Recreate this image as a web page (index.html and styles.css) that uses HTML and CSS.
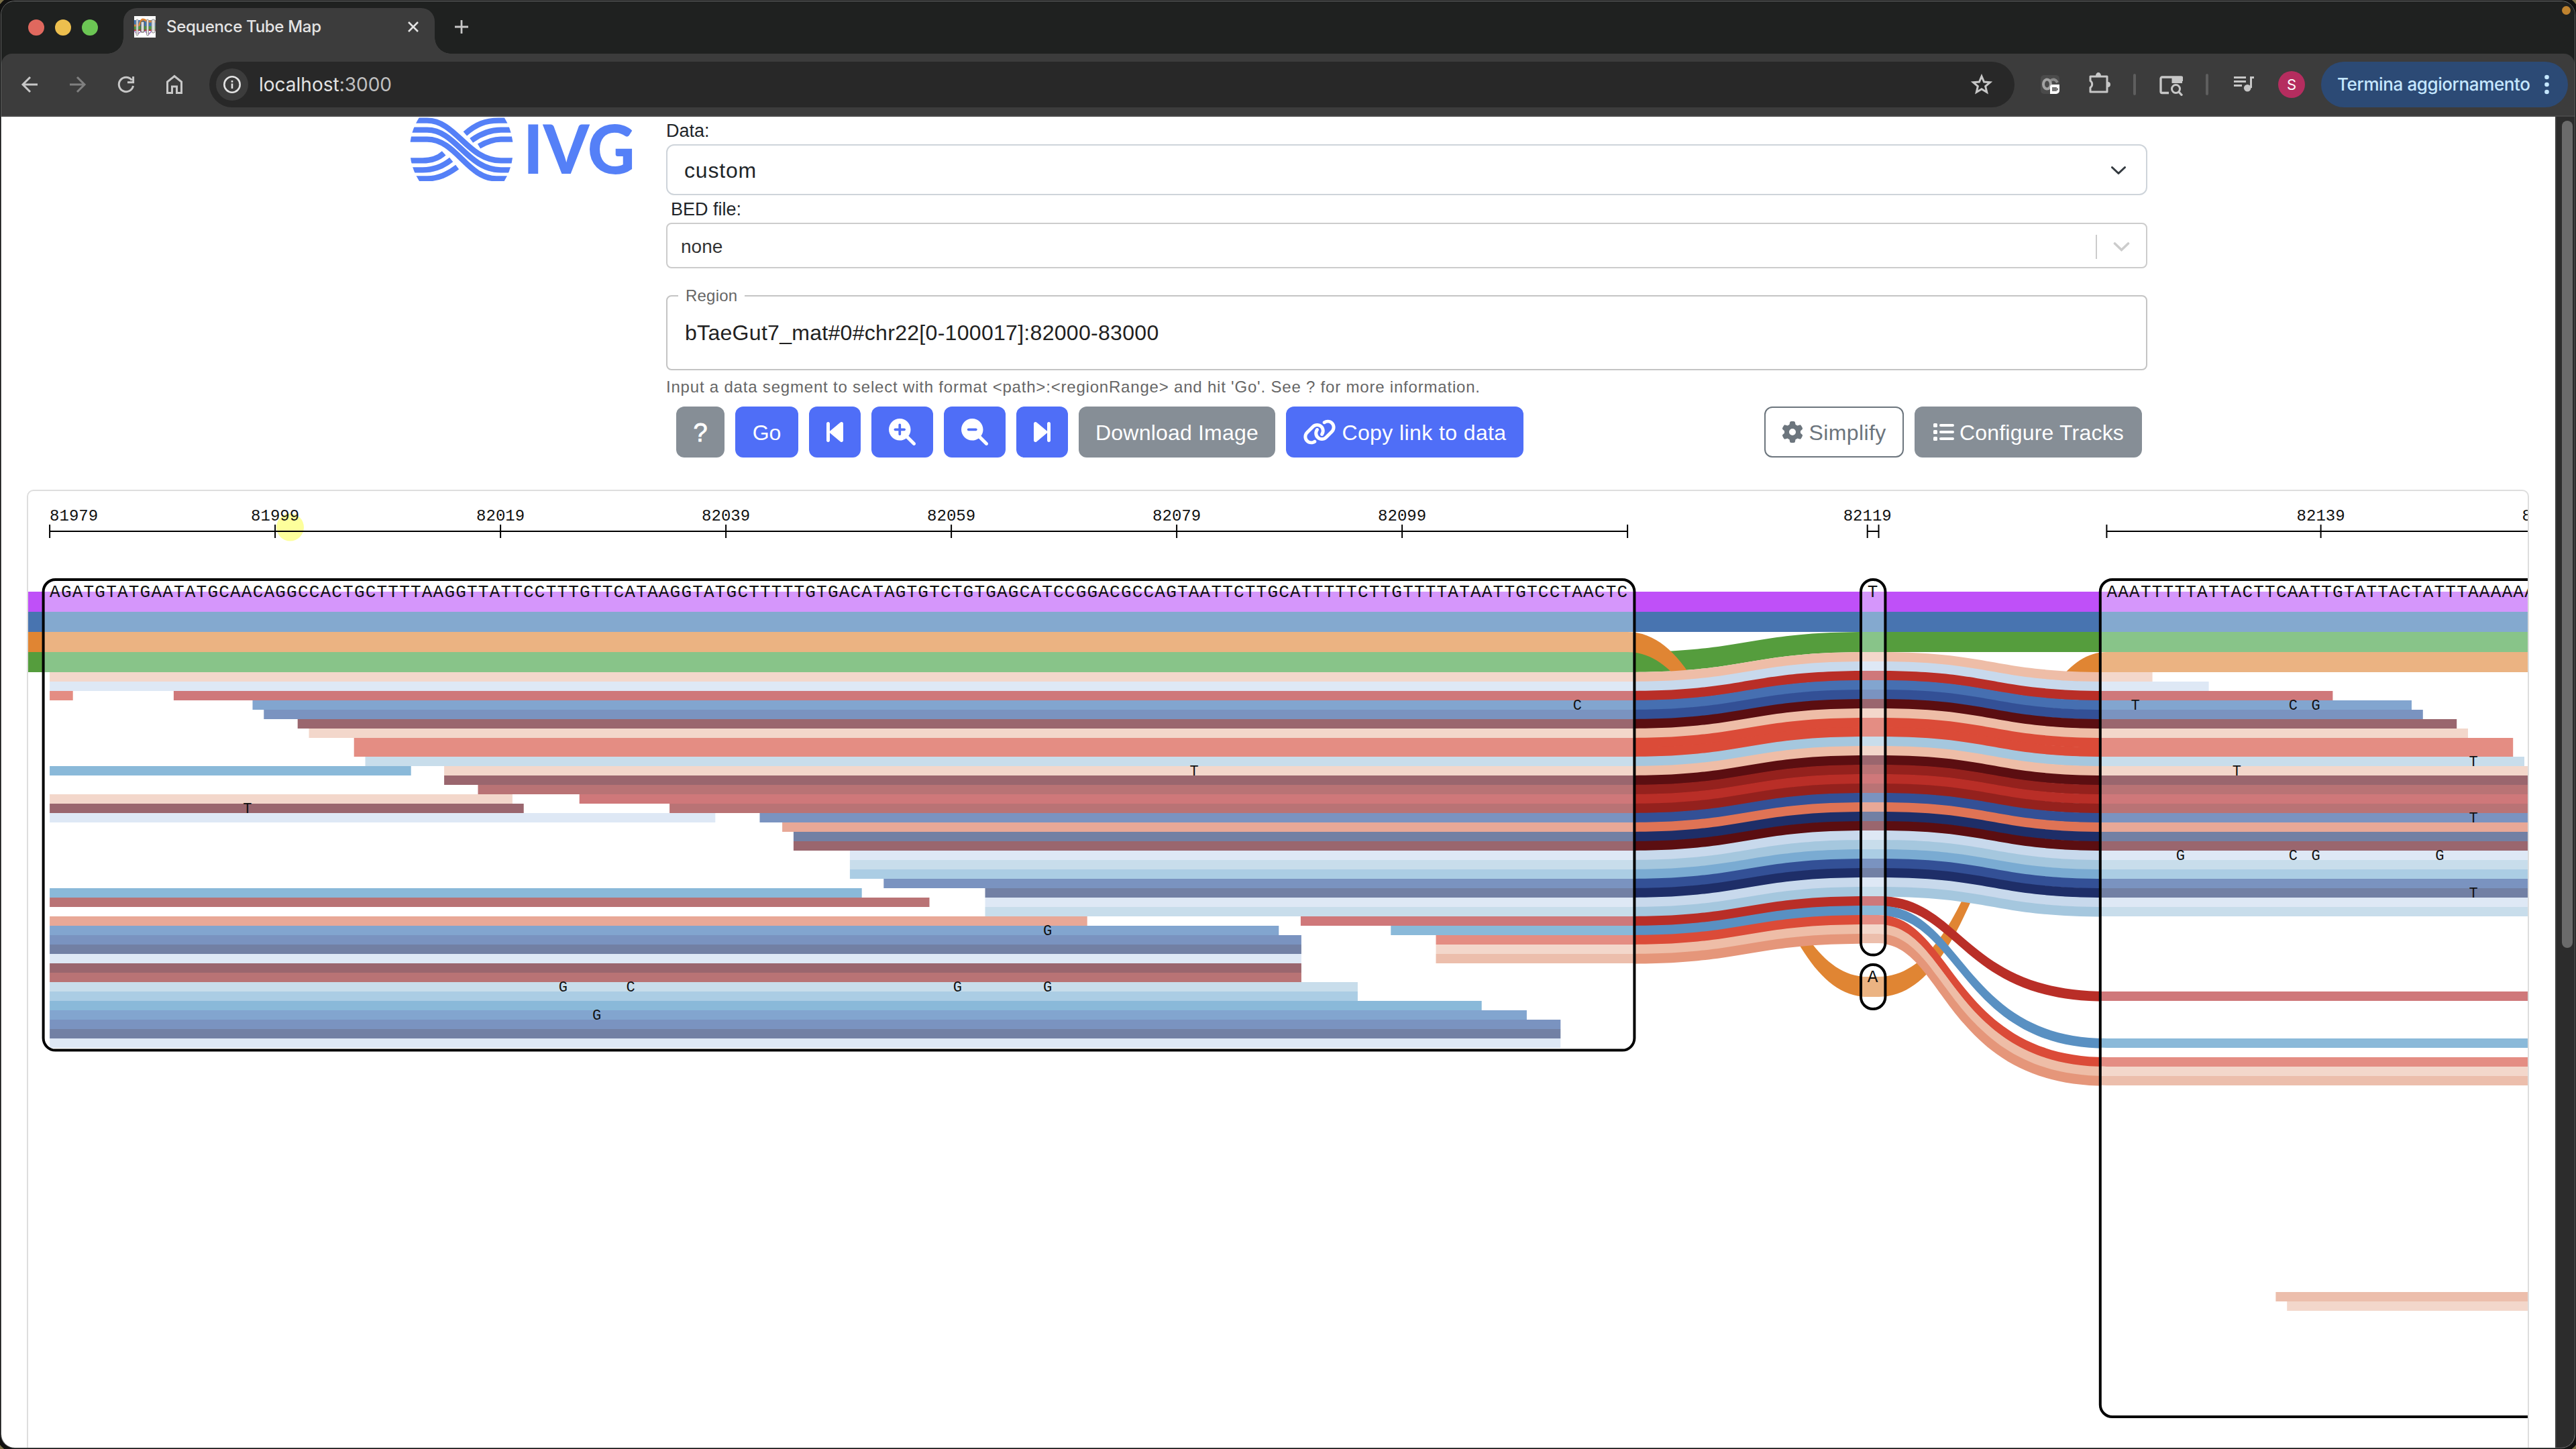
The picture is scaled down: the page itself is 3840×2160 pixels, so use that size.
FILE: index.html
```html
<!DOCTYPE html>
<html lang="en">
<head>
<meta charset="utf-8">
<title>Sequence Tube Map</title>
<link rel="stylesheet" href="styles.css">
</head>
<body>
<div class="window">
  <header class="tabstrip">
    <div class="lights"><i class="red"></i><i class="yellow"></i><i class="green"></i></div>
    <div class="tab">
      <svg class="favicon" viewBox="0 0 32 32"><rect width="32" height="32" fill="#fff"/><path d="M0 6h32v9H0z" fill="#3f76b5"/><path d="M0 15h32v5H0z" fill="#4c9a3b"/><path d="M0 20h32v2H0z" fill="#b8322e"/><path d="M0 14h6C9 14 9 5 13 5s5 3 8 3h11" fill="none" stroke="#e08533" stroke-width="3"/><path d="M0 22l5 5 6-5M16 22l5 6 5-6" fill="none" stroke="#a678c9" stroke-width="1.5"/><g fill="#e8e8e8" fill-opacity=".9" stroke="#8b8b8b"><rect x="3" y="5" width="3" height="24" rx="1.5"/><rect x="10" y="8" width="5" height="16" rx="1" stroke="#444"/><rect x="18.500" y="5" width="3" height="24" rx="1.500"/><rect x="26" y="5" width="5" height="20" rx="2"/></g></svg>
      <span class="tab-title">Sequence Tube Map</span>
      <svg class="tab-close" viewBox="0 0 16 16"><path d="M1 1l14 14M15 1L1 15"/></svg>
    </div>
    <svg class="new-tab" viewBox="0 0 20 20"><path d="M10 0v20M0 10h20"/></svg>
    <i class="rec-dot"></i>
  </header>
  <nav class="toolbar">
    <svg class="nav-icon" viewBox="0 0 24 24"><path d="M24 12H2M13 1L2 12l11 11"/></svg>
    <svg class="nav-icon dim" viewBox="0 0 24 24"><path d="M0 12h22M11 1l11 11-11 11"/></svg>
    <svg class="nav-icon" viewBox="0 0 24 24"><path d="M22.500 14A10.700 10.700 0 1 1 20.500 5.500M22.600 0v8.800H14"/></svg>
    <svg class="nav-icon" viewBox="0 0 24 24"><path d="M1.500 24V8L12-.5 22.500 8v16.500H15.500V15h-7v9.500h-7z"/></svg>
    <div class="address">
      <div class="info"><svg viewBox="0 0 26 26"><circle cx="13" cy="13" r="11.700" fill="none" stroke="#e3e3e3" stroke-width="2.600"/><path d="M13 11.500v7.500M13 7v2.700" stroke="#e3e3e3" stroke-width="2.600"/></svg></div>
      <span class="url">localhost<span class="port">:3000</span></span>
      <svg class="star" viewBox="0 0 30 30"><path d="M15 3.500l3.300 7.800 8.400.7-6.400 5.500 1.900 8.200L15 21.400l-7.200 4.300 1.900-8.200L3.300 12l8.400-.7z"/></svg>
    </div>
    <div class="extensions">
      <svg class="ext" style="width:28px" viewBox="0 0 28 28"><rect width="28" height="28" rx="5" fill="#4b4b4b"/><ellipse cx="9.500" cy="13.500" rx="5.500" ry="7" fill="none" stroke="#a3a3a3" stroke-width="4"/><path d="M15 8q6-4 10 3" fill="none" stroke="#8d8d8d" stroke-width="4"/><path d="M18 14h10v9a5 5 0 0 1-5 5h-9V18a4 4 0 0 1 4-4z" fill="#fff"/><path d="M17 18h7v2l2-1v4l-2-1v2h-7z" fill="#777"/></svg>
      <svg class="ext puzzle" viewBox="0 0 32 32"><path d="M2 6h25v23H2v-6.500a6 6 0 0 0 0-10z" fill="none" stroke="#c7c7c7" stroke-width="3" stroke-linejoin="round"/><path d="M10 5a4 5 0 0 1 8 0M28 14a4 4 0 0 1 0 8" fill="#c7c7c7"/></svg>
      <i class="rule"></i>
      <svg class="ext lens" viewBox="0 0 35 30"><path d="M14 25.500H4a2 2 0 0 1-2-2V4a2 2 0 0 1 2-2h28a2 2 0 0 1 2 2v4" fill="none" stroke="#c7c7c7" stroke-width="3.300"/><path d="M18.500 1H32a2 2 0 0 1 2 2v8H18.500z" fill="#c7c7c7"/><circle cx="24.500" cy="19.500" r="6" fill="none" stroke="#c7c7c7" stroke-width="3"/><path d="M28.500 23.500l5.500 6" stroke="#c7c7c7" stroke-width="3.300"/></svg>
      <i class="rule"></i>
      <svg class="ext music" viewBox="0 0 30 23"><path d="M0 1.500h18M0 7.500h18M0 13.500h12M25.500 17V1.500h4.500" fill="none" stroke="#c7c7c7" stroke-width="3"/><circle cx="20.200" cy="17.300" r="5.300" fill="#c7c7c7"/></svg>
      <div class="avatar">S</div>
    </div>
    <div class="update"><span>Termina aggiornamento</span><svg viewBox="0 0 7 30"><circle cx="3.500" cy="4" r="3.300"/><circle cx="3.500" cy="15" r="3.300"/><circle cx="3.500" cy="26" r="3.300"/></svg></div>
  </nav>

  <div class="viewport">
    <main class="page">
      <section class="top">
        <svg class="logo" viewBox="0 0 1146 330">
          <clipPath id="oval"><path d="M75 15H455Q495 80 495 157Q495 235 455 300H75Q33 235 33 157Q33 80 75 15z"/></clipPath>
          <g clip-path="url(#oval)" fill="none" stroke="#5580f7" stroke-width="25">
            <path d="M20 29H110C240 29 290 208 440 208H500"/><path d="M20 71H110C240 71 290 250 440 250H500"/><path d="M20 113H110C240 113 290 289 420 289H500"/>
            <path d="M500 29H430C370 29 330 45 280 88"/><path d="M500 71H440C390 71 350 88 308 118"/><path d="M500 113H440C410 113 380 122 342 144"/>
            <path d="M20 208H90C130 208 160 198 185 175"/><path d="M20 250H90C140 250 180 235 218 204"/><path d="M20 289H110C160 289 200 270 245 237"/>
          </g>
          <g class="wordmark"><text x="540" y="266" textLength="500" lengthAdjust="spacingAndGlyphs">IVG</text></g>
        </svg>
        <div class="form">
          <label class="label">Data:</label>
          <div class="select"><span>custom</span><svg viewBox="0 0 22 12"><path d="M1.500 1.500l9.500 9 9.500-9"/></svg></div>
          <label class="label bed">BED file:</label>
          <div class="combo"><span>none</span><i></i><svg viewBox="0 0 24 14"><path d="M2 2l10 9.500L22 2"/></svg></div>
          <fieldset class="region"><legend>Region</legend><span>bTaeGut7_mat#0#chr22[0-100017]:82000-83000</span></fieldset>
          <p class="helper">Input a data segment to select with format &lt;path&gt;:&lt;regionRange&gt; and hit 'Go'. See ? for more information.</p>
          <div class="buttons">
            <button class="btn grey w-help">?</button>
            <button class="btn blue w-go">Go</button>
            <button class="btn blue w-step"><svg class="i-step" viewBox="0 0 320 512"><path d="M267.500 440.600c9.500 7.900 22.800 9.700 34.100 4.400s18.400-16.600 18.400-29V96c0-12.400-7.200-23.700-18.400-29s-24.500-3.600-34.100 4.400l-192 160L64 241V96c0-17.700-14.300-32-32-32S0 78.300 0 96v320c0 17.700 14.300 32 32 32s32-14.300 32-32V271l11.500 9.600 192 160z"/></svg></button>
            <button class="btn blue w-zoom"><svg class="i-zoom" viewBox="0 0 512 512"><path fill-rule="evenodd" d="M416 208c0 45.900-14.900 88.300-40 122.700L502.600 457.400c12.500 12.500 12.500 32.800 0 45.300s-32.800 12.500-45.300 0L330.700 376c-34.400 25.200-76.800 40-122.700 40C93.100 416 0 322.900 0 208S93.100 0 208 0S416 93.100 416 208zM184 296c0 13.300 10.700 24 24 24s24-10.700 24-24v-64h64c13.300 0 24-10.700 24-24s-10.700-24-24-24h-64v-64c0-13.300-10.700-24-24-24s-24 10.700-24 24v64h-64c-13.300 0-24 10.700-24 24s10.700 24 24 24h64v64z"/></svg></button>
            <button class="btn blue w-zoom"><svg class="i-zoom" viewBox="0 0 512 512"><path fill-rule="evenodd" d="M416 208c0 45.900-14.900 88.300-40 122.700L502.600 457.400c12.500 12.500 12.500 32.800 0 45.300s-32.800 12.500-45.300 0L330.700 376c-34.400 25.200-76.800 40-122.700 40C93.100 416 0 322.900 0 208S93.100 0 208 0S416 93.100 416 208zM136 184c-13.300 0-24 10.700-24 24s10.700 24 24 24h144c13.300 0 24-10.700 24-24s-10.700-24-24-24H136z"/></svg></button>
            <button class="btn blue w-step"><svg class="i-step flip" viewBox="0 0 320 512"><path d="M267.500 440.600c9.500 7.900 22.800 9.700 34.100 4.400s18.400-16.600 18.400-29V96c0-12.400-7.200-23.700-18.400-29s-24.500-3.600-34.100 4.400l-192 160L64 241V96c0-17.700-14.300-32-32-32S0 78.300 0 96v320c0 17.700 14.300 32 32 32s32-14.300 32-32V271l11.500 9.600 192 160z"/></svg></button>
            <button class="btn grey w-download">Download Image</button>
            <button class="btn blue w-copy"><svg class="i-link" viewBox="0 0 640 512"><path d="M579.800 267.700c56.500-56.500 56.500-148 0-204.500c-50-50-128.800-56.500-186.300-15.400l-1.600 1.100c-14.400 10.300-17.700 30.300-7.400 44.600s30.300 17.700 44.600 7.400l1.600-1.100c32.100-22.900 76-19.300 103.800 8.600c31.500 31.500 31.500 82.500 0 114L422.300 334.800c-31.500 31.500-82.500 31.500-114 0c-27.900-27.900-31.500-71.800-8.600-103.800l1.100-1.600c10.300-14.400 6.900-34.400-7.400-44.600s-34.400-6.900-44.600 7.400l-1.100 1.600C206.500 251.200 213 330 263 380c56.500 56.500 148 56.500 204.500 0L579.800 267.700zM60.200 244.300c-56.500 56.500-56.500 148 0 204.500c50 50 128.800 56.500 186.300 15.400l1.600-1.100c14.400-10.300 17.700-30.300 7.400-44.600s-30.300-17.700-44.600-7.400l-1.600 1.100c-32.100 22.900-76 19.300-103.800-8.600C74 372 74 321 105.500 289.500L217.700 177.200c31.500-31.500 82.500-31.500 114 0c27.900 27.900 31.500 71.800 8.600 103.900l-1.100 1.600c-10.300 14.400-6.900 34.400 7.400 44.600s34.400 6.900 44.600-7.400l1.100-1.600C433.500 260.800 427 182 377 132c-56.500-56.500-148-56.500-204.500 0L60.200 244.300z"/></svg><span>Copy link to data</span></button>
            <div class="spacer"></div>
            <button class="btn outline w-simplify"><svg class="i-em" viewBox="0 0 512 512"><path fill-rule="evenodd" d="M495.900 166.600c3.200 8.700 .5 18.400-6.400 24.600l-43.300 39.400c1.100 8.300 1.700 16.800 1.700 25.400s-.6 17.100-1.700 25.400l43.300 39.400c6.900 6.200 9.600 15.900 6.400 24.600c-4.400 11.900-9.700 23.300-15.800 34.300l-4.700 8.100c-6.600 11-14 21.400-22.100 31.200c-5.900 7.200-15.700 9.600-24.500 6.800l-55.700-17.700c-13.400 10.300-28.200 18.900-44 25.400l-12.500 57.100c-2 9.100-9 16.300-18.200 17.800c-13.800 2.300-28 3.500-42.500 3.500s-28.700-1.200-42.500-3.500c-9.200-1.500-16.200-8.700-18.200-17.800l-12.500-57.100c-15.800-6.500-30.600-15.100-44-25.400L83.100 425.900c-8.800 2.800-18.600 .3-24.500-6.800c-8.100-9.800-15.500-20.200-22.100-31.200l-4.700-8.100c-6.100-11-11.400-22.400-15.800-34.300c-3.200-8.700-.5-18.400 6.400-24.600l43.300-39.400C64.600 273.100 64 264.600 64 256s.6-17.100 1.700-25.400L22.400 191.200c-6.900-6.200-9.600-15.900-6.400-24.600c4.400-11.900 9.700-23.300 15.800-34.300l4.700-8.100c6.600-11 14-21.400 22.100-31.200c5.900-7.200 15.700-9.600 24.500-6.800l55.700 17.700c13.400-10.300 28.200-18.900 44-25.400l12.500-57.100c2-9.100 9-16.300 18.200-17.800C227.300 1.200 241.500 0 256 0s28.700 1.200 42.500 3.500c9.200 1.500 16.200 8.700 18.200 17.800l12.500 57.100c15.800 6.500 30.600 15.100 44 25.400l55.700-17.700c8.800-2.800 18.600-.3 24.500 6.800c8.100 9.800 15.500 20.200 22.100 31.200l4.700 8.100c6.100 11 11.400 22.400 15.800 34.300zM256 336a80 80 0 1 0 0-160 80 80 0 1 0 0 160z"/></svg><span>Simplify</span></button>
            <button class="btn grey w-configure"><svg class="i-em" viewBox="0 0 512 512"><rect x="16" y="48" width="96" height="96" rx="24"/><rect x="16" y="208" width="96" height="96" rx="24"/><rect x="16" y="368" width="96" height="96" rx="24"/><rect x="160" y="64" width="352" height="64" rx="32"/><rect x="160" y="224" width="352" height="64" rx="32"/><rect x="160" y="384" width="352" height="64" rx="32"/></svg><span>Configure Tracks</span></button>
          </div>
        </div>
      </section>
      <section class="panel"><svg id="map" viewBox="42 732 3726 1430"></svg></section>
    </main>
    <aside class="scrollbar"><i></i></aside>
  </div>
</div>
<script src="map.js"></script>
</body>
</html>
```
FILE: styles.css
```css
* { box-sizing: border-box; }
html, body { height: 100%; }
body { margin: 0; overflow: hidden; background: #7d7248; font-family: "Liberation Sans", Arial, sans-serif; color: #212529; }
svg { display: block; flex: none; }

.window { width: 3840px; height: 2160px; display: flex; flex-direction: column; overflow: hidden; border: 2px solid #5f6160; border-top-color: #707272; border-radius: 22px; background: #1f2120; outline: 6px solid #111; outline-offset: -1px; }

.tabstrip { height: 78px; flex: none; display: flex; background: #1f2120; }
.lights { width: 182px; display: flex; gap: 16px; padding: 27px 0 0 40px; }
.lights i { width: 24px; height: 24px; border-radius: 50%; }
.red { background: #e0685e; }
.yellow { background: #edbf4e; }
.green { background: #6cc654; }
.tab { position: relative; width: 464px; height: 68px; margin-top: 10px; padding: 0 24px 12px 16px; display: flex; align-items: center; border-radius: 20px 20px 0 0; background: #3c3c3c; }
.tab::before, .tab::after { content: ""; position: absolute; bottom: 0; width: 24px; height: 24px; }
.tab::before { left: -24px; background: radial-gradient(circle at 0 0, transparent 23.500px, #3c3c3c 24px); }
.tab::after { right: -24px; background: radial-gradient(circle at 100% 0, transparent 23.500px, #3c3c3c 24px); }
.favicon { width: 32px; height: 32px; }
.tab-title { margin-left: 16px; flex: 1; font: 500 24px/30px Inter, sans-serif; letter-spacing: -.3px; color: #e3e3e3; }
.tab-close { width: 16px; height: 16px; stroke: #e3e3e3; stroke-width: 2.600; }
.new-tab { width: 20px; height: 20px; margin: 28px 0 0 30px; stroke: #c7c7c7; stroke-width: 2.800; }
.rec-dot { width: 13px; height: 13px; margin: 7px 6px 0 auto; border-radius: 50%; background: #bf832f; }

.toolbar { height: 94px; flex: none; display: flex; align-items: center; padding: 0 9px 0 30px; background: #3c3c3c; border-bottom: 2px solid #474747; border-radius: 16px 16px 0 0; }
.nav-icon { width: 24px; height: 24px; margin-right: 48px; fill: none; stroke: #c7c7c7; stroke-width: 3; overflow: visible; }
.nav-icon.dim { stroke: #808080; }
.address { flex: none; width: 2691px; height: 68px; margin-left: -8px; padding: 0 33px 0 10px; display: flex; align-items: center; border-radius: 34px; background: #282828; }
.info { width: 48px; height: 48px; display: flex; align-items: center; justify-content: center; border-radius: 50%; background: #3c3c3c; }
.info svg { width: 26px; height: 26px; }
.url { flex: 1; margin-left: 16px; font: 400 28px/34px Inter, sans-serif; color: #e3e3e3; }
.port { color: #c0c0c0; }
.star { width: 32px; height: 32px; fill: none; stroke: #c7c7c7; stroke-width: 2.800; }
.extensions { flex: none; display: flex; align-items: center; margin-left: 39px; width: 418px; }
.ext { height: 28px; }
.puzzle { width: 32px; height: 32px; margin: -4px 34px 0 44px; }
.rule { width: 4px; height: 32px; border-radius: 2px; background: #5e5e5e; }
.lens { width: 35px; height: 30px; margin: 3px 34px 0 35px; }
.music { width: 30px; height: 23px; margin: -2px 36px 0 38px; }
.avatar { width: 40px; height: 40px; border-radius: 50%; background: #b52d5f; color: #fff; font: 22px/40px Inter, sans-serif; text-align: center; }
.update { flex: none; width: 368px; height: 68px; padding: 0 28px 0 24px; display: flex; align-items: center; justify-content: space-between; border-radius: 34px; background: #2c4a75; color: #c5e7ff; font: 500 26px/34px Inter, sans-serif; letter-spacing: -.4px; white-space: nowrap; }
.update svg { width: 7px; height: 30px; fill: #c5e7ff; }

.viewport { flex: 1; min-height: 0; display: flex; background: #fff; }
.page { flex: 1; min-width: 0; display: flex; flex-direction: column; overflow: hidden; }
.scrollbar { width: 29px; padding: 6px 4px 0 8px; background: #2c2c2c; border-left: 2px solid #3c3c3c; }
.scrollbar i { display: block; width: 16px; height: 1233px; border-radius: 8px; background: #6b6b6b; }

.top { display: flex; flex: none; }
.logo { width: 382px; height: 110px; margin: -4px 0 0 598px; overflow: visible; }
.wordmark text { font: 900 302px Lato, sans-serif; fill: #5580f7; }
.form { width: 2208px; display: flex; flex-direction: column; margin-left: 11px; }
.label { height: 41px; font-size: 27px; line-height: 43px; }
.label.bed { padding-left: 7px; }
.select { height: 76px; display: flex; align-items: center; justify-content: space-between; padding: 2px 30px 0 25px; border: 2px solid #ced4da; border-radius: 12px; font-size: 32px; letter-spacing: .8px; }
.select svg { width: 22px; height: 12px; fill: none; stroke: #343a40; stroke-width: 3; stroke-linecap: round; stroke-linejoin: round; }
.combo { height: 68px; display: flex; align-items: center; padding: 3px 24px 0 20px; border: 2px solid #ccc; border-radius: 8px; font-size: 28px; color: #333; }
.combo span { flex: 1; }
.combo i { width: 2px; height: 36px; margin-right: 24px; background: #ccc; }
.combo svg { width: 25px; height: 14px; fill: none; stroke: #ccc; stroke-width: 3.600; stroke-linecap: round; }
.region { height: 125px; margin: 27px 0 0; padding: 0 0 0 26px; border: 2px solid #c4c4c4; border-radius: 8px; min-width: 0; }
.region legend { margin-left: -10px; padding: 0 11px; font-size: 24px; line-height: 28px; letter-spacing: .2px; color: #666; }
.region span { display: block; padding-top: 21px; font-size: 32px; line-height: 40px; letter-spacing: .3px; color: #212121; }
.helper { margin: 0; height: 54px; font-size: 24px; line-height: 50px; letter-spacing: .8px; color: #666; white-space: nowrap; }
.buttons { display: flex; gap: 16px; padding: 0 8px 0 15px; }
.btn { height: 76px; padding: 2px 0 0; display: flex; align-items: center; justify-content: center; border: 0; border-radius: 12px; font: 32px/48px "Liberation Sans", Arial, sans-serif; color: #fff; white-space: nowrap; }
.btn svg { fill: currentColor; margin-top: -2px; }
.blue { background: #4f6ef7; }
.grey { background: #868e96; }
.outline { background: #fff; border: 2px solid #6c757d; color: #6c757d; }
.w-help { width: 72px; font-size: 38px; -webkit-text-stroke: .8px #fff; }
.w-go { width: 94px; }
.w-step { width: 77px; }
.w-zoom { width: 92px; }
.w-download { width: 293px; letter-spacing: .2px; }
.w-copy { width: 354px; gap: 8px; letter-spacing: .4px; }
.w-simplify { width: 208px; gap: 8px; letter-spacing: .4px; }
.w-configure { width: 339px; gap: 8px; letter-spacing: .2px; }
.spacer { flex: 1; }
.i-step { width: 25px; height: 40px; }
.flip { transform: scaleX(-1); }
.i-zoom { width: 40px; height: 40px; }
.i-link { width: 50px; height: 40px; }
.i-em { width: 32px; height: 32px; }

.panel { flex: none; width: 3730px; height: 1440px; margin: 48px 0 0 38px; border: 2px solid #dedede; border-radius: 10px; overflow: hidden; }
.panel svg { width: 3726px; height: 1430px; }
.panel text { font-family: "Liberation Mono", "Courier New", monospace; fill: #111; }
.ruler { stroke: #000; stroke-width: 2; }
.node { fill: none; stroke: #000; stroke-width: 4; }
.tick-label { font-size: 24px; }
.seq { font-size: 26px; }
.mismatch { font-size: 22px; text-anchor: middle; }
```
FILE: map.js
```js
const BASE = 16.8, X1 = 74.1, E1 = 2426.1, X2 = 2783.7, E2 = 2800.5, X3 = 3140.4, EDGE = 3780;

// Each colour: [between nodes, inside a node]
const C = {
  purple: ["#bf50f8", "#d596fb"], blue: ["#4874b0", "#84a9cf"],
  orange: ["#e08533", "#ebb382"], green: ["#559d3d", "#88c489"],
  peach: ["#eebda7", "#f3d7cb"], pale: ["#c8d9ec", "#dee8f5"],
  red: ["#b92e27", "#cf787a"], mid: ["#466fb1", "#82a5cf"],
  royal: ["#335096", "#7a93c0"], maroon: ["#5b0e11", "#9a666e"],
  salmon: ["#db4b38", "#e48d83"], ice: ["#a5c7de", "#c8ddeb"],
  steel: ["#5990c2", "#8ab9d9"], dark: ["#94211d", "#b97375"],
  coral: ["#df7355", "#e8a897"], navy: ["#1e2e68", "#7280a4"],
  sky: ["#7aabd2", "#abcde4"], sand: ["#e5967a", "#ecbeac"]
};

// Reads that cross all three nodes: colour, first base, last base in node 3,
// y in node 3 when it leaves its lane, and the curve shift of its upper and lower edge
const through = [
  ["peach", 0, 4], ["pale", 0, 9], ["red", 11, 20], ["mid", 18, 27], ["royal", 19, 28],
  ["maroon", 22, 31], ["peach", 23, 32], ["salmon", 27, 36], ["salmon", 27, 36], ["ice", 28, 37],
  ["peach", 35], ["maroon", 35], ["dark", 38], ["red", 47], ["dark", 55], ["royal", 63],
  ["coral", 65], ["navy", 66], ["maroon", 66], ["pale", 71], ["ice", 71], ["sky", 71],
  ["royal", 74], ["navy", 83], ["pale", 83], ["ice", 83],
  ["red", 111, 0, 1478, -44, -48], ["steel", 119, 0, 1548, -44, -48], ["salmon", 123, 0, 1576, -59, -63],
  ["peach", 123, 0, 1590, -63, -67], ["sand", 123, 0, 1604, -67, -72]
];
// Reads that end in node 1: row, colour, last base
const short = [
  [2, "salmon", 2], [10, "steel", 32], [13, "peach", 41], [14, "maroon", 42], [15, "pale", 59],
  [23, "steel", 72], [24, "dark", 78], [26, "coral", 92], [27, "mid", 109], [28, "royal", 111],
  [29, "navy", 111], [30, "pale", 111], [31, "maroon", 111], [32, "dark", 111], [33, "ice", 116],
  [34, "sky", 116], [35, "steel", 127], [36, "mid", 131], [37, "royal", 134], [38, "navy", 134],
  [39, "pale", 134]
];

// bend: control point offsets [left start, left end, right start, right end] for the upper and lower edge
function ribbon(y1, y2, y3, h, start, end, color, up = [0, 0, 0, 0], low = up) {
  const a = (E1 + X2) / 2, b = (E2 + X3) / 2;
  return `<path fill="${color}" d="M${start} ${y1}H${E1}C${a + up[0]} ${y1} ${a + up[1]} ${y2} ${X2} ${y2}H${E2}` +
    `C${b + up[2]} ${y2} ${b + up[3]} ${y3} ${X3} ${y3}H${end}v${h}H${X3}` +
    `C${b + low[3]} ${y3 + h} ${b + low[2]} ${y2 + h} ${E2} ${y2 + h}H${X2}` +
    `C${a + low[1]} ${y2 + h} ${a + low[0]} ${y1 + h} ${E1} ${y1 + h}H${start}z"/>`;
}
const bar = (x, y, x2, c) => `<rect x="${x}" y="${y}" width="${x2 - x}" height="14" fill="${c}"/>`;

function tracks(i) {
  let s = ribbon(882, 882, 882, 30, 42, EDGE, C.purple[i]) + ribbon(912, 912, 912, 30, 42, EDGE, C.blue[i]) +
    ribbon(972, 942, 942, 30, 42, EDGE, C.green[i]) +
    ribbon(942, 1456, 972, 30, 42, EDGE, C.orange[i], [-10, 11, 0, 18]);
  // neighbouring curves overlap by a hair so that no background shows between them
  const h = i ? 14 : 14.7;
  through.forEach(([c, n, m, y, u = 0, l = 0], k) => {
    s += ribbon(1002 + 14 * k, 972 + 14 * k, y || 1002 + 14 * k, h, X1 + n * BASE, m ? X3 + m * BASE + 1 : EDGE, C[c][i], [0, 0, u, u], [0, 0, l, l]);
  });
  short.forEach(([k, c, n]) => { s += bar(X1, 1002 + 14 * k, X1 + n * BASE + 1, C[c][i]); });
  s += bar(X3 + 15 * BASE, 1926, EDGE, C.sand[i]) + bar(X3 + 16 * BASE, 1940, EDGE, C.peach[i]);
  return s;
}

const boxes = [[64.6, 864, 2371.8, 701.6], [2774, 864, 36.4, 559.6], [2774, 1438, 36.4, 66], [3130.8, 864, 700, 1248]]
  .map(([x, y, w, h]) => `<rect x="${x}" y="${y}" width="${w}" height="${h}" rx="18"/>`).join("");

const line = (x1, y1, x2, y2) => `<path d="M${x1} ${y1}L${x2} ${y2}"/>`;
const tick = x => line(x, 782, x, 802);
let ruler = line(X1, 792, E1, 792) + line(X2, 792, E2, 792) + line(X3, 792, EDGE, 792);
let labels = `<text class="tick-label" x="${X1}" y="776">81979</text>`;
for (let n = 0; n <= 140; n += 20) ruler += tick(X1 + n * BASE);
[X2, E2, X3, X3 + 19 * BASE].forEach(x => { ruler += tick(x); });
for (let n = 20; n < 140; n += 20) labels += `<text class="tick-label" text-anchor="middle" x="${X1 + n * BASE}" y="776">${81979 + n}</text>`;
[[X2, 82119], [X3 + 19 * BASE, 82139], [X3 + 39 * BASE, 82159]].forEach(([x, t]) => {
  labels += `<text class="tick-label" text-anchor="middle" x="${x}" y="776">${t}</text>`;
});

const seq1 = "AGATGTATGAATATGCAACAGGCCACTGCTTTTAAGGTTATTCCTTTGTTCATAAGGTATGCTTTTTGTGACATAGTGTCTGTGAGCATCCGGACGCCAGTAATTCTTGCATTTTTCTTGTTTTATAATTGTCCTAACTC";
const seq3 = "AAATTTTTATTACTTCAATTGTATTACTATTTAAAAAA";
const seq = (x, y, t) => `<text class="seq" x="${x}" y="${y}" textLength="${t.length * BASE}">${t}</text>`;
const letters = [
  [X1, 14, 17, "T"], [X1, 33, 45, "G"], [X1, 33, 51, "C"], [X1, 36, 48, "G"], [X1, 3, 135, "C"],
  [X1, 10, 101, "T"], [X1, 27, 88, "G"], [X1, 33, 80, "G"], [X1, 33, 88, "G"],
  [X3, 3, 2, "T"], [X3, 3, 16, "C"], [X3, 3, 18, "G"], [X3, 9, 32, "T"], [X3, 10, 11, "T"],
  [X3, 15, 32, "T"], [X3, 19, 6, "G"], [X3, 19, 16, "C"], [X3, 19, 18, "G"], [X3, 19, 29, "G"], [X3, 23, 32, "T"]
].map(([x, k, n, t]) => `<text class="mismatch" x="${x + (n + .5) * BASE + .8}" y="${1016 + 14 * k}">${t}</text>`).join("");

document.getElementById("map").innerHTML =
  `<clipPath id="inside">${boxes}</clipPath>` +
  `<circle cx="432.500" cy="786" r="20.500" fill="#fdff9c"/>` +
  `<g>${tracks(0)}</g><g clip-path="url(#inside)"><rect x="42" y="860" width="3740" height="1300" fill="#fff"/>${tracks(1)}</g>` +
  `<g class="node">${boxes}</g><g class="ruler">${ruler}</g>${labels}` +
  seq(X1, 890, seq1) + seq(X2, 890, "T") + seq(X2, 1464, "A") + seq(X3, 890, seq3) + letters;
```
